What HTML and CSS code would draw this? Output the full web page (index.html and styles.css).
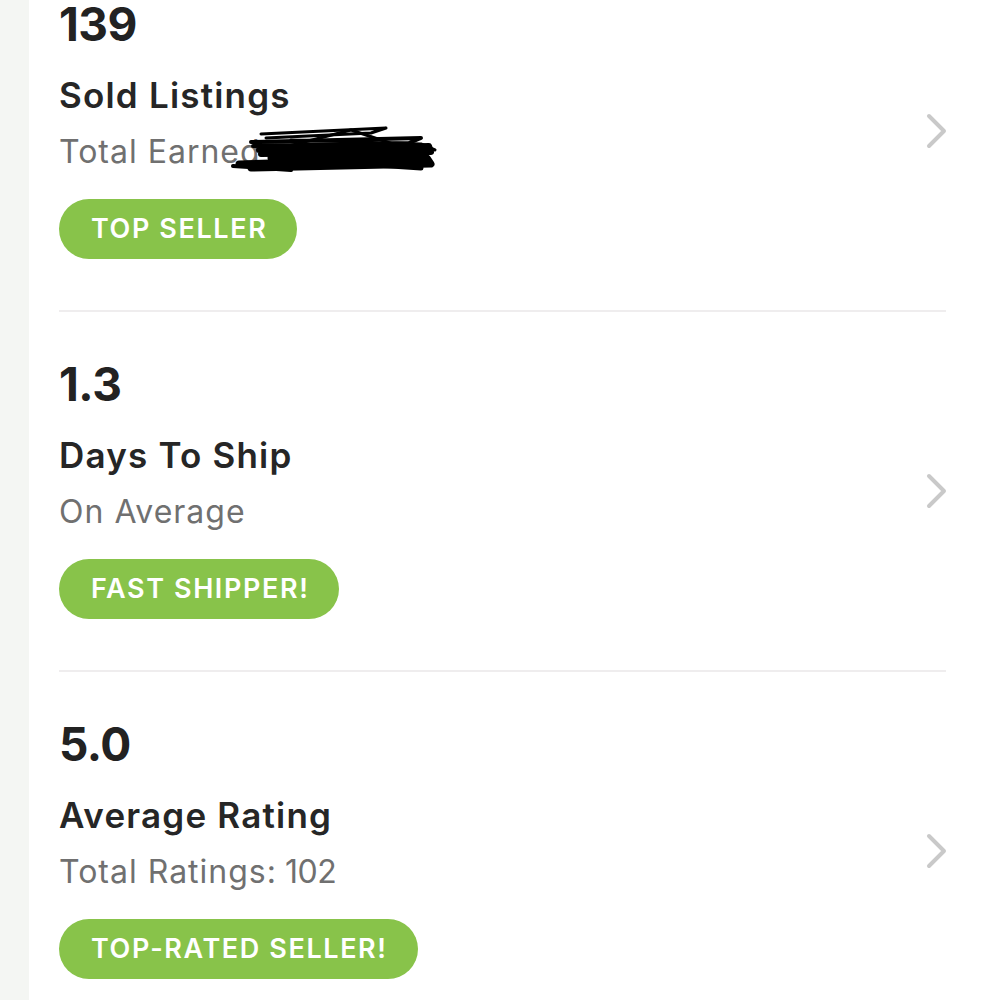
FILE: index.html
```html
<!DOCTYPE html>
<html>
<head>
<meta charset="utf-8">
<link rel="stylesheet" href="styles.css">
</head>
<body>
<div class="page">
  <div class="rail"></div>
  <div class="stats">

    <div class="stat">
      <div class="statBody">
        <div class="statValue">139</div>
        <div class="statTitle">Sold Listings</div>
        <div class="statSub">Total Earned<span class="scribble"><svg width="210" height="52" viewBox="0 0 210 52"><g fill="none" stroke="#000" stroke-linecap="round" stroke-linejoin="round"><path d="M30 10 L155 4 L140 9 L35 14" stroke-width="3"/><path d="M20 18 L190 14 L178 19 L22 22" stroke-width="4"/><path d="M28 26 L198 22 L200 28 L30 30" stroke-width="6"/><path d="M8 40 L196 34 L200 40 L20 44" stroke-width="7"/><path d="M40 34 L185 30" stroke-width="7"/><path d="M50 24 L120 6 L180 26" stroke-width="3"/><path d="M2 42 L60 46" stroke-width="4"/><path d="M60 16 L190 20 L204 26" stroke-width="3"/><path d="M70 36 L190 44" stroke-width="5"/></g></svg></span></div>
        <div class="badge">TOP SELLER</div>
      </div>
      <svg class="chevron" width="22" height="36" viewBox="0 0 22 36"><polyline points="3,3 18,18 3,33" fill="none" stroke="#c9c9c9" stroke-width="4" stroke-linecap="round" stroke-linejoin="round"/></svg>
    </div>

    <div class="stat">
      <div class="statBody">
        <div class="statValue">1.3</div>
        <div class="statTitle">Days To Ship</div>
        <div class="statSub">On Average</div>
        <div class="badge">FAST SHIPPER!</div>
      </div>
      <svg class="chevron" width="22" height="36" viewBox="0 0 22 36"><polyline points="3,3 18,18 3,33" fill="none" stroke="#c9c9c9" stroke-width="4" stroke-linecap="round" stroke-linejoin="round"/></svg>
    </div>

    <div class="stat">
      <div class="statBody">
        <div class="statValue">5.0</div>
        <div class="statTitle">Average Rating</div>
        <div class="statSub">Total Ratings: <span class="num">102</span></div>
        <div class="badge">TOP-RATED SELLER!</div>
      </div>
      <svg class="chevron" width="22" height="36" viewBox="0 0 22 36"><polyline points="3,3 18,18 3,33" fill="none" stroke="#c9c9c9" stroke-width="4" stroke-linecap="round" stroke-linejoin="round"/></svg>
    </div>

  </div>
</div>
</body>
</html>
```

FILE: styles.css
```css
/* Seller stats list */
html, body
	{margin:0;
	padding:0;
	background-color:#FFFFFF;}
body
	{font-family:"Inter","Open Sans",sans-serif;
	color:#222222;}
.page
	{display:flex;
	height:1000px;
	overflow:hidden;}
.rail
	{width:29px;
	flex:none;
	background-color:#F4F6F3;}
.stats
	{flex:1;
	padding:0 54px 0 30px;}
.stat
	{display:flex;
	align-items:center;
	justify-content:space-between;
	padding:49px 0 51px 0;
	border-bottom:2px solid #EFEDEE;}
.stat:first-child
	{padding-top:1px;}
.stat:last-child
	{border-bottom:none;}
.statBody
	{display:flex;
	flex-direction:column;
	align-items:flex-start;}
.statValue
	{font-size:46px;
	font-weight:700;
	line-height:46px;
	letter-spacing:-0.5px;
	color:#222222;}
.statTitle
	{margin-top:26px;
	font-size:35px;
	font-weight:600;
	line-height:44px;
	letter-spacing:1.2px;
	color:#262626;}
.statSub
	{margin-top:15px;
	font-size:32px;
	font-weight:400;
	line-height:40px;
	letter-spacing:1px;
	color:#707070;
	display:flex;
	align-items:center;}
.statSub .num
	{margin-left:8px;
	letter-spacing:-0.5px;}
.scribble
	{display:inline-block;
	width:0;
	overflow:visible;
	position:relative;}
.scribble svg
	{position:absolute;
	left:-30px;
	top:-28px;}
.badge
	{margin-top:27px;
	background-color:#88C34A;
	color:#FFFFFF;
	font-size:27px;
	font-weight:600;
	letter-spacing:1.6px;
	height:60px;
	line-height:60px;
	padding:0 30px 0 32px;
	border-radius:30px;}
.chevron
	{flex:none;
	margin-top:1px;
	margin-right:-2px;}
```
